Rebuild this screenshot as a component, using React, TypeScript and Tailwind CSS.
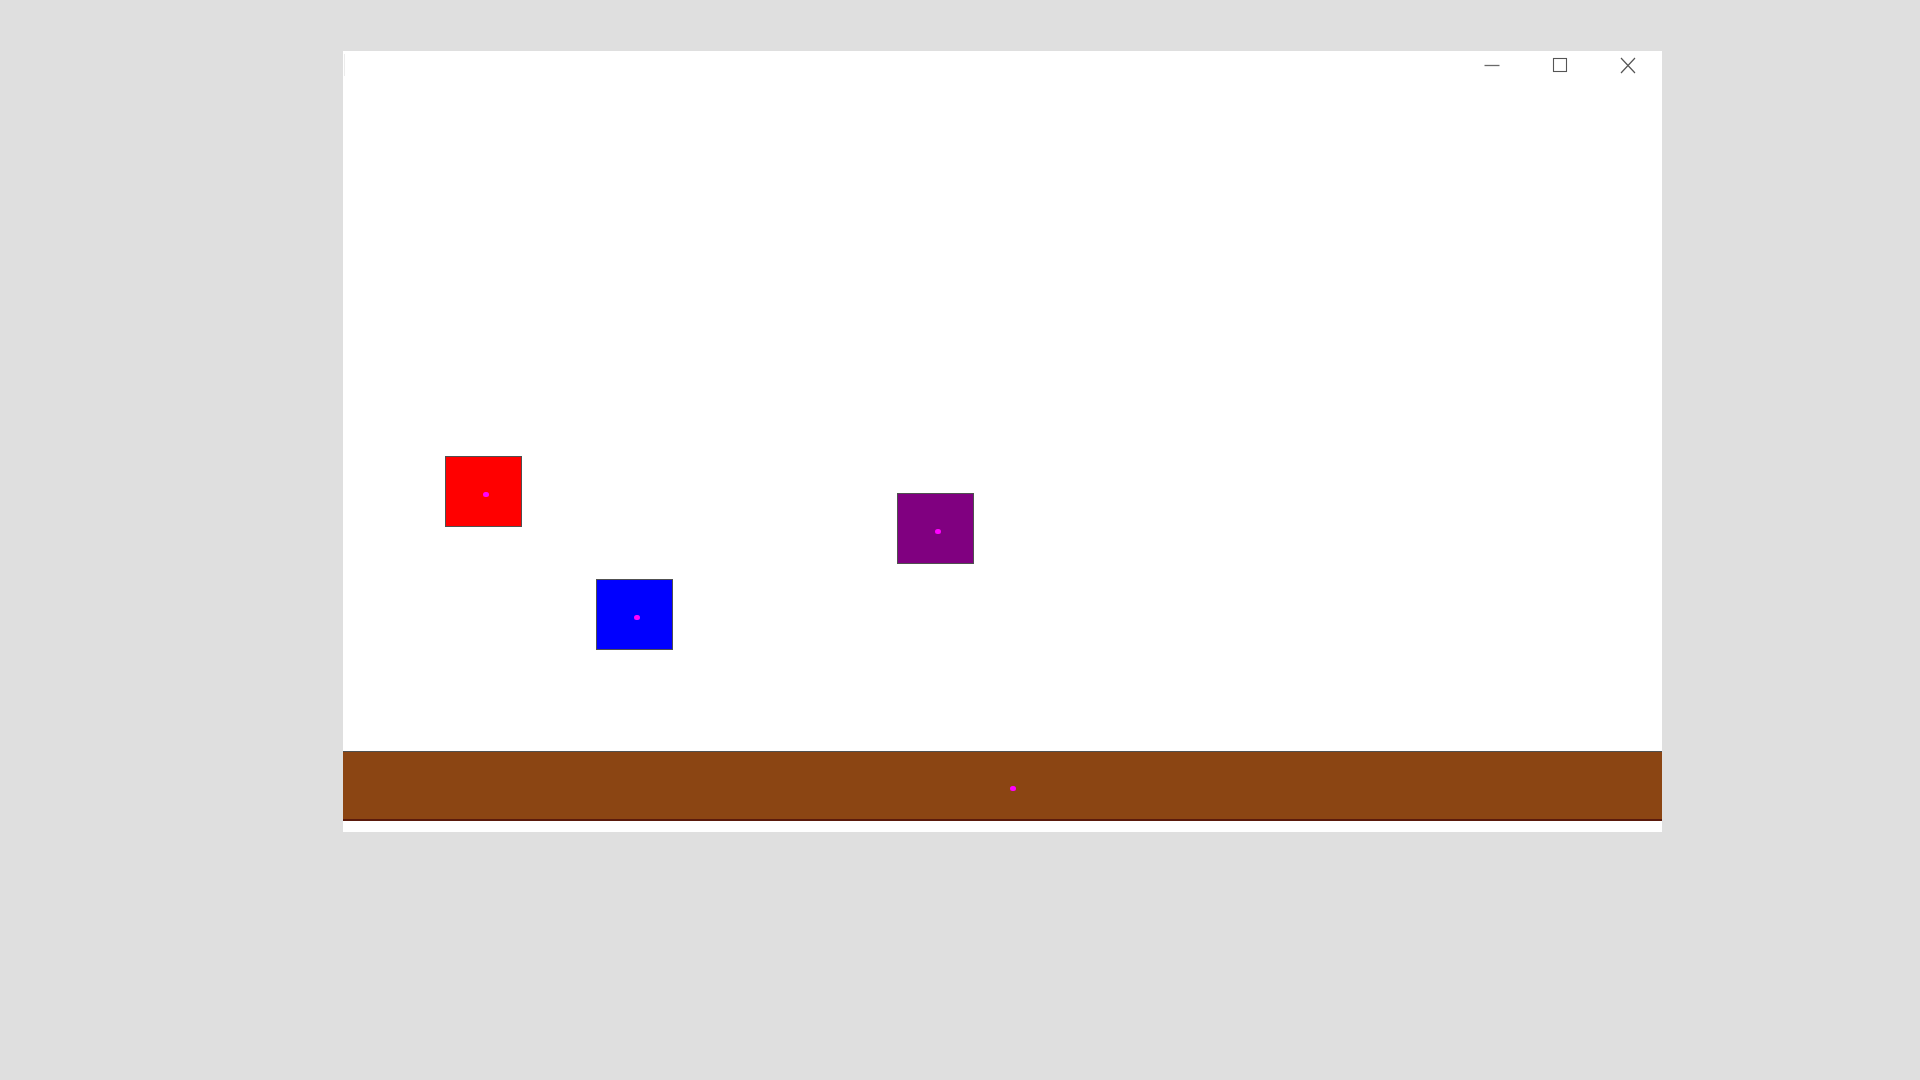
const boxes = [
  { id: "red", color: "bg-[#ff0000]", left: "left-[102px]", top: "top-[375px]" },
  { id: "blue", color: "bg-[#0000ff]", left: "left-[253px]", top: "top-[498px]" },
  { id: "purple", color: "bg-[#800080]", left: "left-[554px]", top: "top-[412px]" },
];

const Dot = ({ className = "" }: { className?: string }) => (
  <div className={`absolute w-[6px] h-[5px] rounded-full bg-[#ff00ff] ${className}`} />
);

const TitleButtons = () => (
  <div className="flex justify-end h-[30px] pb-[2px] text-[#555]">
    <div className="w-[68px] flex items-center justify-center">
      <svg width="16" height="16" viewBox="0 0 16 16">
        <path d="M0.5 8.5h15" stroke="#6a6a6a" strokeWidth="1.3" />
      </svg>
    </div>
    <div className="w-[68px] flex items-center justify-center">
      <svg width="16" height="16" viewBox="0 0 16 16">
        <rect x="1.5" y="1.5" width="13" height="13" fill="none" stroke="#555" strokeWidth="1.1" />
      </svg>
    </div>
    <div className="w-[68px] flex items-center justify-center">
      <svg width="16" height="17" viewBox="0 0 16 17">
        <path d="M1 1l14 15M15 1L1 16" stroke="#555" strokeWidth="1.2" />
      </svg>
    </div>
  </div>
);

export default function App() {
  return (
    <div className="w-[1920px] h-[1080px] bg-[#dfdfdf] pt-[51px] pl-[343px] font-['Liberation_Sans',sans-serif]">
      <div className="relative w-[1319px] h-[781px] bg-white flex flex-col">
        <div className="absolute left-[1px] top-[3px] w-px h-[22px] bg-[#ececec]" />
        <TitleButtons />
        <div className="relative h-[670px]">
          {boxes.map((b) => (
            <div
              key={b.id}
              className={`absolute ${b.left} ${b.top} w-[77px] h-[71px] border border-[#505050] ${b.color}`}
            >
              <Dot className="left-[37px] top-[35px]" />
            </div>
          ))}
        </div>
        <div className="relative h-[70px] bg-[#8b4513] border-t border-t-[#505050] border-b-2 border-b-[#5a1a0c]">
          <Dot className="left-[667px] top-[34px]" />
        </div>
        <div className="h-[11px]" />
      </div>
    </div>
  );
}
